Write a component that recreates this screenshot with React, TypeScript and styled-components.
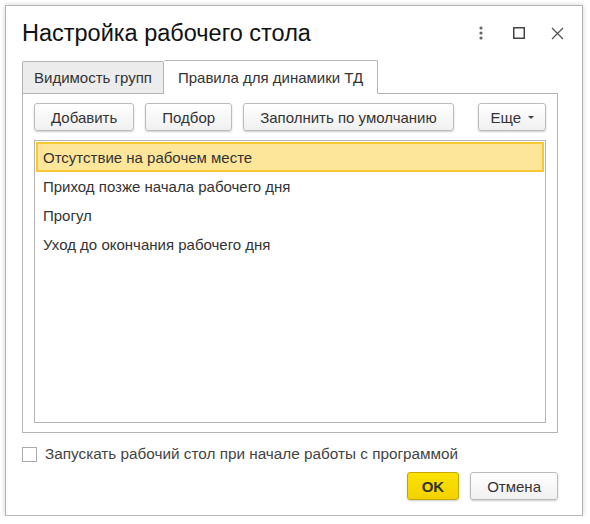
import React from "react";
import styled, { createGlobalStyle } from "styled-components";

const Global = createGlobalStyle`
  html, body {
    margin: 0;
    padding: 0;
    background: #fff;
    font-family: Arial, "Liberation Sans", sans-serif;
  }
`;

const rules = [
  "Отсутствие на рабочем месте",
  "Приход позже начала рабочего дня",
  "Прогул",
  "Уход до окончания рабочего дня",
];

function App() {
  return (
    <>
      <Global />
      <Dialog>
        <Header>
          <Title>Настройка рабочего стола</Title>
          <HeaderIcons>
            <IconBtn>
              <svg width="4" height="14" viewBox="0 0 4 14">
                <circle cx="2" cy="2" r="1.6" fill="#666" />
                <circle cx="2" cy="7" r="1.6" fill="#666" />
                <circle cx="2" cy="12" r="1.6" fill="#666" />
              </svg>
            </IconBtn>
            <IconBtn>
              <svg width="12" height="12" viewBox="0 0 12 12">
                <rect x="0.75" y="0.75" width="10.5" height="10.5" fill="none" stroke="#444" strokeWidth="1.5" />
              </svg>
            </IconBtn>
            <IconBtn>
              <svg width="13" height="13" viewBox="0 0 13 13">
                <path d="M1 1 L12 12 M12 1 L1 12" stroke="#555" strokeWidth="1.3" />
              </svg>
            </IconBtn>
          </HeaderIcons>
        </Header>

        <Tabs>
          <Tab>Видимость групп</Tab>
          <Tab active>Правила для динамики ТД</Tab>
        </Tabs>
        <Panel>
          <Toolbar>
            <Button>Добавить</Button>
            <Button>Подбор</Button>
            <Button>Заполнить по умолчанию</Button>
            <Spacer />
            <Button compact>
              Еще <Caret />
            </Button>
          </Toolbar>
          <List>
            {rules.map((r, i) => (
              <Row key={r} selected={i === 0}>
                {r}
              </Row>
            ))}
          </List>
        </Panel>

        <CheckRow>
          <Box />
          <span>Запускать рабочий стол при начале работы с программой</span>
        </CheckRow>

        <Footer>
          <Button primary>OK</Button>
          <Button wide>Отмена</Button>
        </Footer>
      </Dialog>
    </>
  );
}

export default App;

const Dialog = styled.div`
  margin: 5px 0 0 5px;
  height: 509px;
  background: #fff;
  border: 1px solid #b4b4b4;
  box-shadow: 0 0 5px rgba(0, 0, 0, 0.18);
  display: flex;
  flex-direction: column;
  padding: 0 24px 0 16px;
  box-sizing: content-box;
  width: 536px;
`;

const Header = styled.div`
  display: flex;
  align-items: center;
  height: 54px;
`;

const Title = styled.div`
  font-size: 23.5px;
  color: #111;
  margin-top: 1px;
`;

const HeaderIcons = styled.div`
  margin-left: auto;
  margin-right: -18px;
  display: flex;
  align-items: center;
`;

const IconBtn = styled.div`
  width: 38px;
  height: 20px;
  display: flex;
  align-items: center;
  justify-content: center;
`;

const Tabs = styled.div`
  display: flex;
  align-items: flex-end;
  height: 33px;
  position: relative;
  z-index: 1;
`;

const Tab = styled.div<{ active?: boolean }>`
  height: ${(p) => (p.active ? "34px" : "33px")};
  box-sizing: border-box;
  padding: 0 ${(p) => (p.active ? "14px" : "11px")};
  display: flex;
  align-items: center;
  font-size: 15px;
  color: #333;
  white-space: nowrap;
  border: 1px solid #b4b4b4;
  border-bottom: ${(p) => (p.active ? "1px solid #fff" : "1px solid #b4b4b4")};
  border-left: ${(p) => (p.active ? "none" : "1px solid #b4b4b4")};
  background: ${(p) => (p.active ? "#fff" : "#ececec")};
  border-radius: 2px 2px 0 0;
  margin-bottom: -1px;
`;

const Panel = styled.div`
  border: 1px solid #b4b4b4;
  height: 340px;
  box-sizing: border-box;
  padding: 9px 11px 9px 11px;
  display: flex;
  flex-direction: column;
`;

const Toolbar = styled.div`
  display: flex;
  gap: 11px;
  margin-bottom: 9px;
`;

const Spacer = styled.div`
  flex: 1;
`;

const Button = styled.button<{ primary?: boolean; wide?: boolean; compact?: boolean }>`
  flex-shrink: 0;
  white-space: nowrap;
  height: 28px;
  padding: 0 ${(p) => (p.primary ? "14px" : p.compact ? "11px" : "16px")};
  min-width: ${(p) => (p.wide ? "86px" : "auto")};
  font-family: Arial, "Liberation Sans", sans-serif;
  font-size: 15px;
  font-weight: ${(p) => (p.primary ? "bold" : "normal")};
  color: #333;
  border-radius: 3px;
  border: 1px solid ${(p) => (p.primary ? "#c4a800" : "#bcbcbc")};
  background: ${(p) =>
    p.primary
      ? "linear-gradient(#fbe200, #f2d200)"
      : "linear-gradient(#ffffff, #f0f0f0)"};
  box-shadow: 0 1px 2px rgba(0, 0, 0, 0.2);
  display: flex;
  align-items: center;
  justify-content: center;
  gap: 7px;
`;

const Caret = styled.span`
  width: 0;
  height: 0;
  border-left: 3px solid transparent;
  border-right: 3px solid transparent;
  border-top: 3px solid #444;
`;

const List = styled.div`
  flex: 1;
  border: 1px solid #b4b4b4;
  padding: 1px;
`;

const Row = styled.div<{ selected?: boolean }>`
  box-sizing: border-box;
  display: flex;
  align-items: center;
  padding-left: ${(p) => (p.selected ? "5px" : "7px")};
  font-size: 15px;
  color: #333;
  background: ${(p) => (p.selected ? "#fde69a" : "transparent")};
  border: ${(p) => (p.selected ? "2px solid #f6c832" : "none")};
  height: ${(p) => (p.selected ? "30px" : "29px")};
`;

const CheckRow = styled.div`
  display: flex;
  align-items: center;
  gap: 8px;
  margin-top: 12px;
  font-size: 15.3px;
  color: #444;
`;

const Box = styled.span`
  width: 13px;
  height: 13px;
  border: 1px solid #aaa;
  background: #fff;
`;

const Footer = styled.div`
  display: flex;
  justify-content: flex-end;
  gap: 11px;
  margin-top: 9px;
`;
